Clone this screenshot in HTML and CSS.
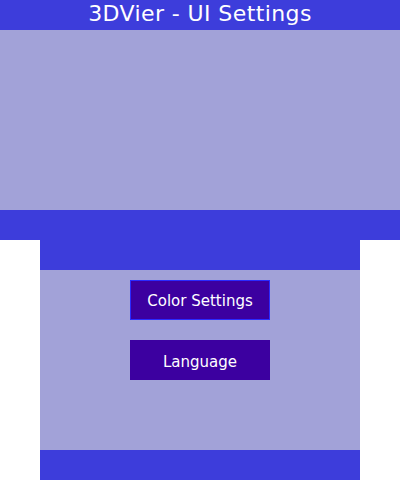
FILE: index.html
```html
<!DOCTYPE html>
<html>
<head>
<meta charset="utf-8">
<link rel="stylesheet" href="styles.css">
</head>
<body>
<div class="top">
  <div class="title">3DVier - UI Settings</div>
  <div class="top-body"></div>
  <div class="top-foot"></div>
</div>
<div class="bottom">
  <div class="bar"></div>
  <div class="menu">
    <div class="btn selected">Color Settings</div>
    <div class="btn">Language</div>
  </div>
  <div class="bar"></div>
</div>
</body>
</html>
```
FILE: styles.css
```css
html, body {
  margin: 0;
  padding: 0;
  background: #ffffff;
  width: 400px;
  height: 480px;
  overflow: hidden;
  font-family: "DejaVu Sans", sans-serif;
}
.top {
  width: 400px;
  height: 240px;
  display: flex;
  flex-direction: column;
}
.title {
  height: 30px;
  box-sizing: border-box;
  background: #3d3ddb;
  color: #ffffff;
  font-size: 22px;
  letter-spacing: 0.4px;
  line-height: 28px;
  text-align: center;
}
.top-body {
  flex: 1;
  background: #a2a2d8;
}
.top-foot {
  height: 30px;
  background: #3d3ddb;
}
.bottom {
  width: 320px;
  height: 240px;
  margin: 0 auto;
  display: flex;
  flex-direction: column;
}
.bar {
  height: 30px;
  background: #3d3ddb;
}
.menu {
  flex: 1;
  background: #a2a2d8;
  display: flex;
  flex-direction: column;
  align-items: center;
  padding-top: 10px;
  gap: 20px;
}
.btn {
  width: 140px;
  height: 40px;
  box-sizing: border-box;
  background: #3c00a0;
  color: #ffffff;
  font-size: 15px;
  padding-top: 4px;
  line-height: 36px;
  text-align: center;
}
.btn.selected {
  border: 1px solid #2a2aff;
  padding-top: 3px;
  line-height: 35px;
}
```
